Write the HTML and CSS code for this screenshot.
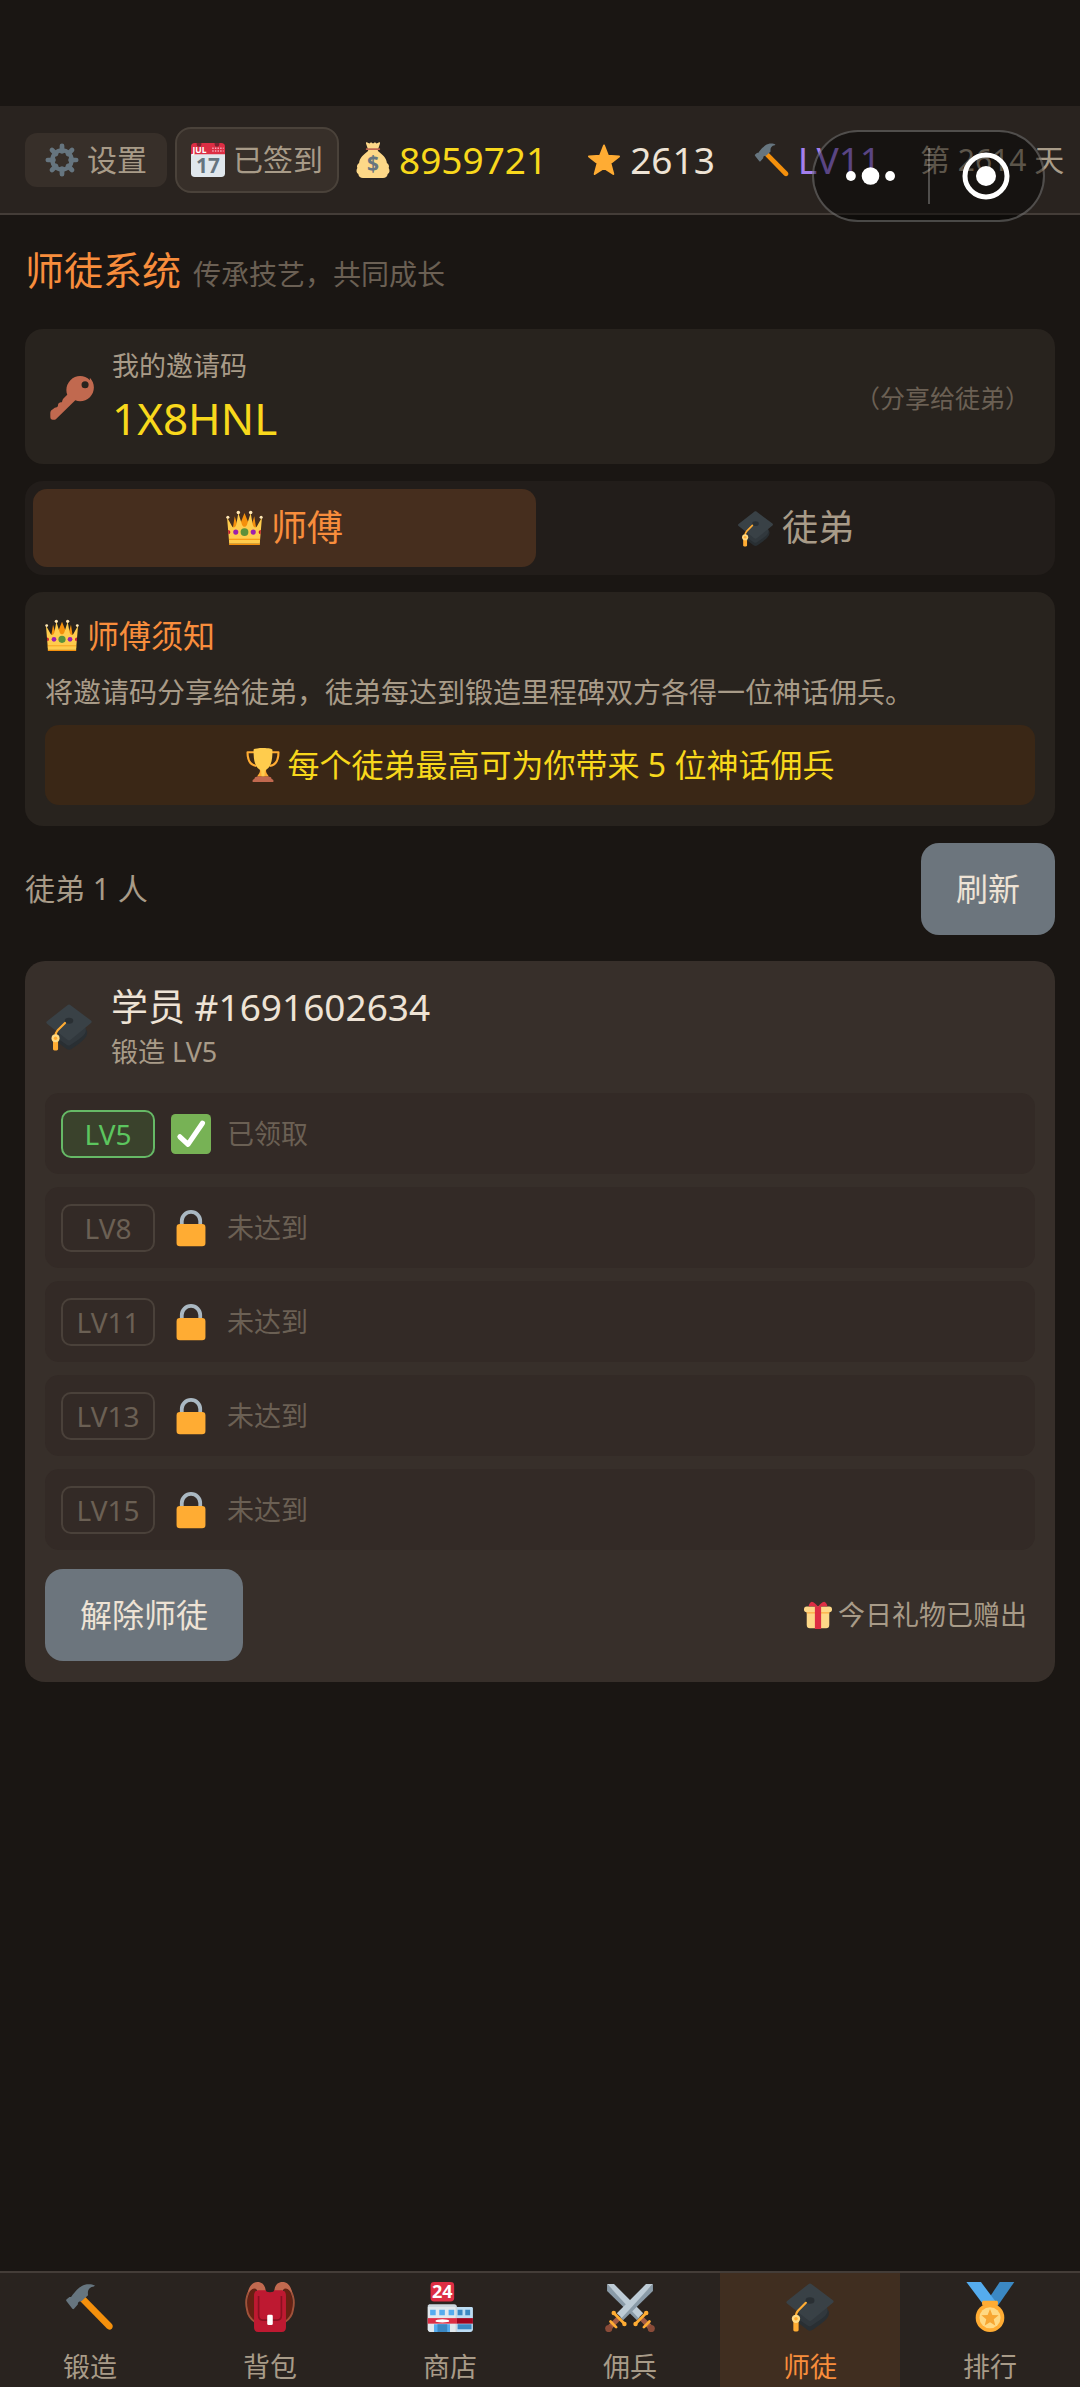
FILE: index.html
```html
<!DOCTYPE html>
<html lang="zh-CN">
<head>
    <meta charset="UTF-8">
    <meta name="viewport" content="width=device-width, initial-scale=1.0">
    <title>师徒系统</title>
    <link rel="stylesheet" href="styles.css">
</head>
<body>
    <!-- icon sprite -->
    <svg class="sprite" aria-hidden="true">
        <symbol id="i-gear" viewBox="0 0 36 36">
            <g stroke="#66757f" stroke-width="5" stroke-linecap="round">
                <path d="M18 3v6M18 27v6M3 18h6M27 18h6M7.4 7.4l4.2 4.2M24.4 24.4l4.2 4.2M7.4 28.6l4.2-4.2M24.4 11.6l4.2-4.2"/>
            </g>
            <circle cx="18" cy="18" r="10.2" fill="none" stroke="#66757f" stroke-width="4.6"/>
        </symbol>
        <symbol id="i-calendar" viewBox="0 0 36 36">
            <path fill="#e0e7ec" d="M36 32a4 4 0 0 1-4 4H4a4 4 0 0 1-4-4V9h36z"/>
            <path fill="#dd2e44" d="M0 12V4a4 4 0 0 1 4-4h28a4 4 0 0 1 4 4v8z"/>
            <path fill="#792331" d="M6 0h5v1.500a2.500 2.500 0 0 1-5 0zM25 0h5v1.500a2.500 2.500 0 0 1-5 0z"/>
            <path stroke="#f4abba" stroke-width="1.500" stroke-dasharray="1.500 1.300" d="M22.500 5.500h12M22.500 8.500h12"/>
            <text x="1.500" y="10.500" font-size="9" font-weight="700" fill="#fff">JUL</text>
            <text x="18" y="31.500" font-size="22" font-weight="700" fill="#66757f" text-anchor="middle">17</text>
        </symbol>
        <symbol id="i-bag" viewBox="0 0 36 36">
            <path fill="#fdd888" d="M31.900 21c-.5-5-4.300-8.300-8.400-11.500-1-.8-1-2 0-3.500L25 1.500c.3-1-.5-1.500-1.300-1L21.500 1.500 20 .2l-2 1.200-2-1.200-1.500 1.300-2.200-1c-.8-.5-1.600 0-1.300 1L12.500 6c1 1.500 1 2.700 0 3.500C8.400 12.700 4.600 16 4.100 21c-1.800 1-2.600 3-1.800 5-1.400 2-1 5 1 6C3.600 34.600 5.500 36 8 36h20c2.500 0 4.400-1.400 4.700-4 2-1 2.400-4 1-6 .8-2 0-4-1.800-5z"/>
            <path fill="#bf6952" d="M11.500 6.200h13c.9 0 .9 1.900 0 1.900h-13c-.9 0-.9-1.900 0-1.900z"/>
            <text x="18" y="29" font-size="21" font-weight="700" fill="#67757f" text-anchor="middle">$</text>
        </symbol>
        <symbol id="i-star" viewBox="0 0 36 36">
            <path fill="#ffac33" stroke="#ffac33" stroke-width="2" stroke-linejoin="round" d="M18 3.500l4 10.300 11 .6-8.600 6.900 2.900 10.700L18 26l-9.300 6 2.900-10.700L3 14.400l11-.6z"/>
        </symbol>
        <symbol id="i-hammer" viewBox="0 0 36 36">
            <path fill="#f4900c" d="M13.600 9.800l20 20.300c1.100 1.200 1 2.600.1 3.500-.9.900-2.400 1-3.500-.1L10.500 13.300z"/>
            <path fill="#66757f" d="M1.200 12.400l2-1.600c1 .3 1.700-.2 2-1.200C7.800 6.300 11 2.700 14.300 1.900c2.600-.6 5.500-.3 6.900.5.4.4.2.7-.4.8-3.800.6-4.700 3.200-4.200 6.300l-4.800 4.400c-1.500-.2-2.700.5-2.600 2.300l-2.700 3.100c-.4.4-.8.3-1.200-.1l-4.300-5.500c-.3-.5-.2-.9.200-1.300z"/>
        </symbol>
        <symbol id="i-key" viewBox="0 0 36 36">
            <path fill="#c1694f" fill-rule="evenodd" d="M32.600 3.400c-4.400-4.400-11.500-4.400-15.900 0-3.200 3.200-4.100 7.900-2.600 11.900L11 18.400c-1 .9-.7 2.200-1.300 2.900-.8.800-1.800.2-2.600 1-.9.900-.2 2.100-1 2.900-.6.700-2 .3-3 1.300L.9 28.300C0 29.200.3 32 .3 33.800.3 35 1 35.700 2.200 35.700c1 0 2 .2 2.800-.6l15.700-15.200c4 1.500 8.700.6 11.900-2.600 4.400-4.400 4.400-11.500 0-15.900zM28.700 10a2.900 2.900 0 1 1 0-5.800 2.900 2.900 0 0 1 0 5.800z"/>
        </symbol>
        <symbol id="i-crown" viewBox="0 0 36 36">
            <path fill="#f4900c" d="M5 28l3.500-22 3.500 12 6-15 6 15 3.500-12L31 28z"/>
            <path fill="#ffcc4d" d="M3 31L1 7l5 9c1.500 2 3.300.5 4-2l2-11 3.500 11c1 3 4 3 5 0L24 3l2 11c.7 2.500 2.500 4 4 2l5-9-2 24z"/>
            <g fill="#ffe8b6"><circle cx="1.800" cy="7" r="1.500"/><circle cx="12" cy="2.500" r="1.700"/><circle cx="24" cy="2.500" r="1.700"/><circle cx="34.200" cy="7" r="1.500"/></g>
            <circle cx="18" cy="21.500" r="3.800" fill="#5c913b"/>
            <circle cx="9.500" cy="21.500" r="2.500" fill="#9c1fae"/>
            <circle cx="26.500" cy="21.500" r="2.500" fill="#9c1fae"/>
            <path fill="#be1931" d="M2.100 19.500c2.700 0 2.700 4 .3 4zM33.900 19.500c-2.700 0-2.700 4-.3 4z"/>
            <path fill="#f4900c" d="M3 28h30v1.200H3zM3 32.500h30V34H3z"/>
            <path fill="#ffcc4d" d="M3 29h30v3.700H3z"/>
        </symbol>
        <symbol id="i-cap" viewBox="0 0 36 36">
            <path fill="#292f33" d="M9 21l18-6 4.500 6c1 4-3 7-6 9.500l-5.500 3.800c-1.500 1-2.500 1-4 0L9 29z"/>
            <path fill="#31383d" d="M30 17.500c2.500 6-2 8-11 14-1 .6-1.500.6-2.500 0L10 27V20z"/>
            <path fill="#394146" d="M16.800 1.600c.8-.6 1.600-.6 2.400 0L34.500 13.200c.7.500.7 1.200 0 1.800L19.200 27.600c-.8.600-1.600.6-2.400 0L1.500 15.500c-.7-.5-.7-1.200 0-1.800z"/>
            <ellipse cx="18" cy="13.300" rx="3.200" ry="2.300" fill="#292f33"/>
            <path fill="none" stroke="#ffac33" stroke-width="1.600" stroke-linecap="round" d="M15 15l-5.500 5.500c-1.200 1.200-1.700 2.500-1.700 5"/>
            <path fill="#ffac33" d="M6 27h3.800v7.500c0 1.500-3.800 1.500-3.800 0z"/>
            <circle cx="7.900" cy="26.500" r="3" fill="#ffd983"/>
            <circle cx="7.900" cy="26.500" r="1.300" fill="#ffac33"/>
        </symbol>
        <symbol id="i-trophy" viewBox="0 0 36 36">
            <path fill="none" stroke="#ffac33" stroke-width="2.200" stroke-linejoin="round" d="M10 4.500H1.600c0 7 1.400 13.500 9.400 14.500M26 4.500h8.400c0 7-1.400 13.500-9.400 14.500"/>
            <path fill="#c1694f" d="M9 32.500c0-2 2-1.500 3.500-2.500h11c1.500 1 3.500.5 3.500 2.500L29 34v2H7v-2z"/>
            <path fill="#ffac33" d="M14.500 22h7c-1 4 1 5 2.500 8H12c1.500-3 3.500-4 2.500-8z"/>
            <path fill="#ffcc4d" d="M8 2c0-1 4-2 10-2s10 1 10 2c0 10-1 17-6 20.500l-2 1.500-.5 6h-3L16 24l-2-1.500C9 19 8 12 8 2z"/>
        </symbol>
        <symbol id="i-check" viewBox="0 0 36 36">
            <rect width="36" height="36" rx="4" fill="#77b255"/>
            <path fill="none" stroke="#fff" stroke-width="4.600" stroke-linecap="round" stroke-linejoin="round" d="M8 20.500l7.300 6.800L28.300 8.300"/>
        </symbol>
        <symbol id="i-lock" viewBox="0 0 36 36">
            <path fill="none" stroke="#aab8c2" stroke-width="3.400" d="M9.700 18v-6.200a8.300 8.300 0 0 1 16.600 0V18"/>
            <rect x="5" y="14.500" width="26" height="20" rx="3" fill="#ffac33"/>
        </symbol>
        <symbol id="i-gift" viewBox="0 0 36 36">
            <path fill="#fdd888" d="M3.500 13h29v18c0 3-1.500 4-4 4h-21c-2.500 0-4-1-4-4z"/>
            <path fill="#fcab40" d="M3.500 12h29v4h-29z"/>
            <rect x="0" y="7" width="36" height="7.500" rx="3.500" fill="#fdd888"/>
            <path fill="#dd2e44" d="M14 7h8v29h-8z"/>
            <path fill="#dd2e44" d="M18 7.500C16 4 12.500 1.500 10 1c-2.500 1-4 3.500-4 6 3-.5 8-.5 12 .5zM18 7.500C20 4 23.500 1.500 26 1c2.500 1 4 3.500 4 6-3-.5-8-.5-12 .5z"/>
        </symbol>
        <symbol id="i-backpack" viewBox="0 0 36 36">
            <path fill="#662113" d="M8 3C2 6 1 14 2 20c.5 4 3 7 6 9zM28 3c6 3 7 11 6 17-.5 4-3 7-6 9z"/>
            <path fill="none" stroke="#a0523a" stroke-width="1.400" d="M7 3C1 6 0 14 1.500 20c.5 4 3 7 6 9M29 3c6 3 7 11 5.500 17-.5 4-3 7-6 9"/>
            <path fill="#c1694f" d="M2 8C3 2 6 0 9 0c4 0 6 3 6 8H9c0-4-3-5-7 0zM34 8c-1-6-4-8-7-8-4 0-6 3-6 8h6c0-4 3-5 7 0z"/>
            <path fill="#be1931" d="M6.500 10c0-2.500 1-4 3.500-4h5c0 1 1 1.300 3 1.300S21 7 21 6h5c2.500 0 3.500 1.500 3.500 4v22.500c0 2-1 3.500-3 3.500h-17c-2 0-3-1.500-3-3.500z"/>
            <path fill="none" stroke="#8b1020" stroke-width="1.200" d="M9.800 10v14c0 2 1 3.500 3 3.500h10.400c2 0 3-1.500 3-3.500V10"/>
            <rect x="16" y="23.500" width="4" height="7.500" rx="1" fill="#fff"/>
        </symbol>
        <symbol id="i-store" viewBox="0 0 36 36">
            <rect x="4" y="0" width="17" height="14" rx="2.500" fill="#dd2e44"/>
            <text x="12.500" y="11.600" font-size="13" font-weight="700" fill="#fff" text-anchor="middle">24</text>
            <path fill="#bdddf4" d="M22 18h11.500c.6 0 1 .5 1 1v15c0 1-.7 2-2 2H22z"/>
            <path fill="#ccd6dd" d="M3 16h18c1.200 0 2 .8 2 2v18H4c-1 0-2-.8-2-2V17z"/>
            <path fill="#e1e8ed" d="M2 18h20v18H4c-1 0-2-1-2-2z"/>
            <g fill="#55acee"><path d="M3.700 20h4v4h-4zM10.300 20h4v4h-4zM17 20h4v4h-4zM6.500 30.500H18V36H6.500z"/></g>
            <path fill="#3b88c3" d="M9 30.500h7V36H9zM23.500 20H27v4h-3.500zM29 20h3.500v4H29zM23.500 30.500h10V34h-10z"/>
            <path fill="#dd2e44" d="M2 26h21v4H2z"/>
            <path fill="#a0041e" d="M23 26h11.500v4H23z"/>
            <ellipse cx="12.500" cy="28" rx="5" ry="1.200" fill="#fff"/>
        </symbol>
        <symbol id="i-sword" viewBox="0 0 36 36">
            <path fill="#8a9ba8" d="M34.500 1.500V6.500L13 27.500l-2-2z"/>
            <path fill="#bdcbd5" d="M34.500 1.500h-5L8.500 22.500l3.500 3.500z"/>
            <path fill="none" stroke="#a05a44" stroke-width="3.600" d="M9.500 26.500l-6 6"/>
            <path fill="none" stroke="#ffac33" stroke-width="2" stroke-linecap="round" d="M6.500 22.500l7.500 7.500M4 28.500l4 4"/>
            <circle cx="6.300" cy="22.300" r="1.600" fill="#ffac33"/>
            <circle cx="14" cy="30.200" r="1.600" fill="#ffac33"/>
            <circle cx="2.700" cy="33.500" r="2.600" fill="#8a4b38"/>
        </symbol>
        <symbol id="i-swords" viewBox="0 0 36 36">
            <use href="#i-sword" transform="matrix(-1 0 0 1 36 0)"/>
            <use href="#i-sword"/>
        </symbol>
        <symbol id="i-medal" viewBox="0 0 36 36">
            <path fill="#3b88c3" d="M25 0L17 12l6 6L35.500 0z"/>
            <path fill="#55acee" d="M1 0l12 16h10.500L11.500 0z"/>
            <path fill="#ffac33" d="M13 13.500h10c1 0 1 3.500 0 3.500H13c-1 0-1-3.500 0-3.500z"/>
            <circle cx="18" cy="25.700" r="10.300" fill="#ffac33"/>
            <circle cx="18" cy="25.700" r="7.600" fill="#ffd983"/>
            <path fill="#f7a632" d="M18 19.500l1.700 4.200 4.500.3-3.500 2.900 1.100 4.400-3.800-2.400-3.800 2.400 1.100-4.400-3.500-2.900 4.500-.3z"/>
        </symbol>
    </svg>

    <header class="topbar">
        <div class="actions">
            <button class="settings-btn" type="button">
                <svg class="icon"><use href="#i-gear"/></svg>设置
            </button>
            <button class="signin-btn" type="button">
                <svg class="icon"><use href="#i-calendar"/></svg>已签到
            </button>
        </div>
        <div class="stats">
            <span class="stat gold"><svg class="icon"><use href="#i-bag"/></svg>8959721</span>
            <span class="stat"><svg class="icon"><use href="#i-star"/></svg>2613</span>
            <span class="stat level"><svg class="icon"><use href="#i-hammer"/></svg>LV11</span>
            <span class="day">第 2614 天</span>
        </div>

        <!-- mini program menu -->
        <div class="capsule">
            <button type="button" aria-label="更多">
                <svg class="capsule-more" viewBox="0 0 50 18"><circle cx="5" cy="9" r="5"/><circle cx="25" cy="9" r="9"/><circle cx="45" cy="9" r="5"/></svg>
            </button>
            <button type="button" aria-label="关闭">
                <svg class="capsule-close" viewBox="0 0 48 48"><circle class="ring" cx="24" cy="24" r="21"/><circle cx="24" cy="24" r="10"/></svg>
            </button>
        </div>
    </header>

    <main>
        <div class="page-title">
            <h1>师徒系统</h1>
            <p>传承技艺，共同成长</p>
        </div>

        <section class="card invite">
            <svg class="icon"><use href="#i-key"/></svg>
            <div>
                <p class="invite-label">我的邀请码</p>
                <p class="invite-code">1X8HNL</p>
            </div>
            <span class="invite-hint">（分享给徒弟）</span>
        </section>

        <div class="tabs">
            <button class="tab active" type="button"><svg class="icon"><use href="#i-crown"/></svg>师傅</button>
            <button class="tab" type="button"><svg class="icon"><use href="#i-cap"/></svg>徒弟</button>
        </div>

        <section class="card notice">
            <h2><svg class="icon"><use href="#i-crown"/></svg>师傅须知</h2>
            <p>将邀请码分享给徒弟，徒弟每达到锻造里程碑双方各得一位神话佣兵。</p>
            <div class="banner"><svg class="icon"><use href="#i-trophy"/></svg>每个徒弟最高可为你带来 5 位神话佣兵</div>
        </section>

        <div class="list-head">
            <span>徒弟 1 人</span>
            <button class="btn" type="button">刷新</button>
        </div>

        <section class="student">
            <div class="student-head">
                <svg class="icon"><use href="#i-cap"/></svg>
                <div>
                    <h3>学员 #1691602634</h3>
                    <p>锻造 LV5</p>
                </div>
            </div>
            <ul class="milestones">
                <li class="done"><span class="badge">LV5</span><svg class="icon"><use href="#i-check"/></svg>已领取</li>
                <li><span class="badge">LV8</span><svg class="icon"><use href="#i-lock"/></svg>未达到</li>
                <li><span class="badge">LV11</span><svg class="icon"><use href="#i-lock"/></svg>未达到</li>
                <li><span class="badge">LV13</span><svg class="icon"><use href="#i-lock"/></svg>未达到</li>
                <li><span class="badge">LV15</span><svg class="icon"><use href="#i-lock"/></svg>未达到</li>
            </ul>
            <div class="student-foot">
                <button class="btn" type="button">解除师徒</button>
                <span class="gift"><svg class="icon"><use href="#i-gift"/></svg>今日礼物已赠出</span>
            </div>
        </section>
    </main>

    <nav class="tabbar">
        <a href="#"><svg class="icon"><use href="#i-hammer"/></svg>锻造</a>
        <a href="#"><svg class="icon"><use href="#i-backpack"/></svg>背包</a>
        <a href="#"><svg class="icon"><use href="#i-store"/></svg>商店</a>
        <a href="#"><svg class="icon"><use href="#i-swords"/></svg>佣兵</a>
        <a href="#" class="active"><svg class="icon"><use href="#i-cap"/></svg>师徒</a>
        <a href="#"><svg class="icon"><use href="#i-medal"/></svg>排行</a>
    </nav>
</body>
</html>
```

FILE: styles.css
```css
* {
    box-sizing: border-box;
    margin: 0;
    padding: 0;
}
body {
    display: flex;
    flex-direction: column;
    min-height: 100vh;
    padding-top: 106px;
    background-color: #1a1613;
    color: #a89b88;
    font-family: "Noto Sans", "Noto Sans CJK SC", sans-serif;
    font-size: 27px;
    line-height: 40px;
}
h1, h2, h3 {
    font-weight: 400;
}
button {
    border: none;
    background: none;
    color: inherit;
    font: inherit;
    cursor: pointer;
    white-space: nowrap;
}
.sprite {
    position: absolute;
    width: 0;
    height: 0;
}
.icon {
    display: block;
    flex: none;
    width: 34px;
    height: 34px;
}

/* top bar */
.topbar {
    position: relative;
    display: flex;
    align-items: center;
    gap: 16px;
    padding: 21px 0 20px 25px;
    background-color: #29231f;
    border-bottom: 2px solid #443d38;
    white-space: nowrap;
}
.actions {
    display: flex;
    align-items: center;
    gap: 8px;
    font-size: 30px;
}
.settings-btn,
.signin-btn {
    display: flex;
    align-items: center;
    gap: 8px;
    background-color: #372f29;
}
.settings-btn {
    height: 54px;
    padding: 0 20px;
    border-radius: 12px;
}
.signin-btn {
    height: 66px;
    padding: 0 14px;
    border: 2px solid #4a423a;
    border-radius: 16px;
}
.stats {
    display: flex;
    align-items: center;
    gap: 39px;
}
.stat {
    display: flex;
    align-items: center;
    gap: 8px;
    color: #eee3d5;
    font-size: 37px;
}
.stat .icon {
    width: 36px;
    height: 36px;
}
.stat.gold {
    color: #f8d81c;
}
.stat.level {
    color: #a47fee;
}
.day {
    font-size: 30px;
}

.capsule {
    position: absolute;
    top: 24px;
    right: 35px;
    display: flex;
    align-items: center;
    width: 233px;
    height: 92px;
    border: 2px solid rgba(255, 255, 255, 0.25);
    border-radius: 46px;
    background-color: rgba(0, 0, 0, 0.45);
}
.capsule button {
    display: flex;
    flex: 1;
    align-items: center;
    justify-content: center;
    height: 56px;
}
.capsule button + button {
    border-left: 2px solid rgba(255, 255, 255, 0.25);
}
.capsule svg {
    fill: #fff;
}
.capsule-more {
    width: 49px;
    height: 18px;
}
.capsule-close {
    width: 48px;
    height: 48px;
}
.capsule-close .ring {
    fill: none;
    stroke: #fff;
    stroke-width: 5;
}

/* content */
main {
    flex: 1;
    padding: 31px 25px 25px;
}
.page-title {
    display: flex;
    align-items: baseline;
    gap: 12px;
    margin-bottom: 35px;
}
.page-title h1 {
    color: #f88d3c;
    font-size: 39px;
    line-height: 48px;
}
.page-title p {
    color: #6b6054;
    font-size: 28px;
}
.card {
    margin-bottom: 17px;
    border-radius: 18px;
    background-color: #28231e;
}
.invite {
    display: flex;
    align-items: center;
    gap: 18px;
    padding: 17px 25px 14px;
}
.invite .icon {
    width: 44px;
    height: 44px;
}
.invite-code {
    color: #f8d81c;
    font-size: 44px;
    line-height: 64px;
}
.invite-hint {
    margin-left: auto;
    color: #6b6054;
    font-size: 25px;
}
.tabs {
    display: flex;
    gap: 8px;
    margin-bottom: 17px;
    padding: 8px;
    border-radius: 18px;
    background-color: #221d1a;
}
.tab {
    display: flex;
    flex: 1;
    align-items: center;
    justify-content: center;
    gap: 8px;
    height: 78px;
    border-radius: 14px;
    font-size: 36px;
}
.tab .icon {
    width: 37px;
    height: 37px;
}
.tab.active {
    background-color: #462e1e;
    color: #f88d3c;
}
.notice {
    padding: 21px 20px;
}
.notice h2 {
    display: flex;
    align-items: center;
    gap: 8px;
    margin-bottom: 13px;
    color: #f88d3c;
    font-size: 32px;
    line-height: 46px;
}
.notice p {
    font-size: 28px;
}
.banner {
    display: flex;
    align-items: center;
    justify-content: center;
    gap: 8px;
    margin-top: 13px;
    padding: 16px;
    border-radius: 14px;
    background-color: #3a2716;
    color: #f8d81c;
    font-size: 32px;
    line-height: 48px;
}
.list-head {
    display: flex;
    align-items: center;
    justify-content: space-between;
    margin-bottom: 26px;
    font-size: 30px;
}
.btn {
    height: 92px;
    padding: 0 35px;
    border-radius: 18px;
    background-color: #6c757d;
    color: #eee3d5;
    font-size: 32px;
}

/* student */
.student {
    padding: 21px 20px;
    border-radius: 20px;
    background-color: #372f2a;
}
.student-head {
    display: flex;
    align-items: center;
    gap: 18px;
    margin-bottom: 21px;
}
.student-head .icon {
    width: 48px;
    height: 48px;
}
.student-head h3 {
    color: #eee3d5;
    font-size: 37px;
    line-height: 50px;
}
.milestones {
    display: flex;
    flex-direction: column;
    gap: 13px;
    margin-bottom: 19px;
    list-style: none;
}
.milestones li {
    display: flex;
    align-items: center;
    gap: 16px;
    height: 81px;
    padding: 0 16px;
    border-radius: 14px;
    background-color: #332a26;
    color: #6b6054;
}
.milestones .icon {
    width: 40px;
    height: 40px;
}
.badge {
    width: 94px;
    height: 48px;
    border: 2px solid #4a413a;
    border-radius: 10px;
    font-size: 28px;
    line-height: 44px;
    text-align: center;
}
.done .badge {
    border-color: #66b966;
    background-color: #3a422c;
    color: #5cc65f;
}
.student-foot {
    display: flex;
    align-items: center;
    justify-content: space-between;
}
.gift {
    display: flex;
    align-items: center;
    gap: 6px;
    padding-right: 8px;
}
.gift .icon {
    width: 28px;
    height: 28px;
}

/* bottom navigation */
.tabbar {
    position: sticky;
    bottom: 0;
    display: flex;
    border-top: 2px solid #443d38;
    background-color: #29231f;
}
.tabbar a {
    display: flex;
    flex: 1;
    flex-direction: column;
    align-items: center;
    gap: 15px;
    padding-top: 9px;
    color: inherit;
    text-decoration: none;
}
.tabbar .icon {
    width: 50px;
    height: 50px;
}
.tabbar .active {
    background-color: #402e20;
    color: #f88d3c;
}
```
